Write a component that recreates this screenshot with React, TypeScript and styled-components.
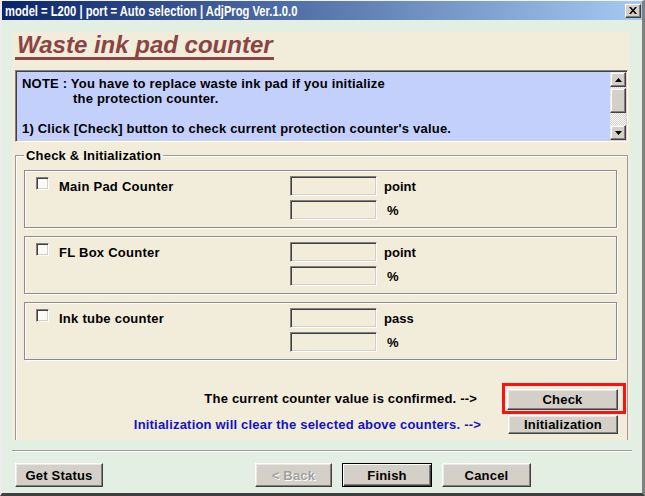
import React from 'react';
import styled, { createGlobalStyle } from 'styled-components';

const GlobalStyle = createGlobalStyle`
  html, body {
    margin: 0;
    padding: 0;
    background: #d4d0c8;
  }
  body {
    font-family: 'Liberation Sans', Arial, sans-serif;
  }
  * {
    box-sizing: border-box;
  }
`;

const Window = styled.div`
  width: 645px;
  height: 496px;
  display: flex;
  flex-direction: column;
  background: #e2efe2;
  border-style: solid;
  border-width: 1px 3px 3px 2px;
  border-color: #f4f4f4 #808080 #404040 #ececec;
  overflow: hidden;
`;

const TitleBar = styled.div`
  height: 19px;
  flex: none;
  display: flex;
  align-items: center;
  justify-content: space-between;
  padding: 0 1px 0 3px;
  background: linear-gradient(to right, #0a246a, #a6caf0);
  color: #fff;
  font-weight: bold;
  font-size: 14px;
  white-space: nowrap;
`;

/* the original caption font is a narrow one, squeeze a regular face to match */
const Caption = styled.span`
  display: inline-block;
  transform: scaleX(0.8);
  transform-origin: left center;
`;

const CloseButton = styled.button`
  width: 16px;
  height: 14px;
  padding: 0;
  display: flex;
  align-items: center;
  justify-content: center;
  background: #d4d0c8;
  border: 1px solid;
  border-color: #fff #404040 #404040 #fff;
  box-shadow: inset -1px -1px 0 #808080;
`;

const Body = styled.div`
  flex: 1;
  display: flex;
  flex-direction: column;
  padding: 12px 12px 0 10px;
`;

const Panel = styled.div`
  height: 408px;
  flex: none;
  display: flex;
  flex-direction: column;
  align-items: stretch;
  background: #f2ecda;
  padding: 0 2px 0 3px;
  overflow: hidden;
`;

const Heading = styled.h1`
  align-self: flex-start;
  margin: 1px 0 0;
  padding: 0 1px 0 2px;
  font-size: 24px;
  line-height: 24px;
  font-style: italic;
  font-weight: bold;
  color: #8a4444;
  border-bottom: 3px solid #8a4444;
`;

const NoteBox = styled.div`
  margin-top: 10px;
  height: 72px;
  display: flex;
  background: #c4d0fc;
  border: 1px solid;
  border-color: #808080 #fff #fff #808080;
  box-shadow: inset 1px 1px 0 #404040, inset -1px -1px 0 #d4d0c8;
`;

const NoteText = styled.div`
  flex: 1;
  padding: 5px 6px;
  font-size: 13px;
  font-weight: bold;
  letter-spacing: 0.2px;
  line-height: 15px;
  white-space: pre;
  color: #000;
`;

const Indent = styled.span`
  padding-left: 51px;
`;

const ScrollBar = styled.div`
  width: 16px;
  margin: 1px 1px 1px 0;
  display: flex;
  flex-direction: column;
`;

const ScrollArrow = styled.div`
  height: 15px;
  flex: none;
  display: flex;
  align-items: center;
  justify-content: center;
  background: #d4d0c8;
  border: 1px solid;
  border-color: #e8e8e8 #404040 #404040 #e8e8e8;
  box-shadow: inset -1px -1px 0 #808080, inset 1px 1px 0 #fff;
`;

const ScrollTrack = styled.div`
  flex: 1;
  display: flex;
  flex-direction: column;
  background: repeating-conic-gradient(#ffffff 0 25%, #d4d0c8 0 50%) 0 0 / 2px 2px;
`;

const ScrollThumb = styled.div`
  height: 25px;
  margin-top: 1px;
  background: #d4d0c8;
  border: 1px solid;
  border-color: #e8e8e8 #404040 #404040 #e8e8e8;
  box-shadow: inset -1px -1px 0 #808080, inset 1px 1px 0 #fff;
`;

const Group = styled.fieldset`
  flex: 1;
  margin: 6px 0 0;
  padding: 0 1px 0 8px;
  min-width: 0;
  border: 1px solid #9a9a9a;
  border-bottom: none;
  box-shadow: inset 1px 1px 0 #fff;
  display: flex;
  flex-direction: column;
`;

const Legend = styled.legend`
  margin-left: 0;
  padding: 0 2px;
  font-size: 13px;
  font-weight: bold;
  letter-spacing: 0.2px;
  line-height: 15px;
  color: #000;
`;

const CounterBox = styled.div`
  height: 58px;
  margin: 8px 9px 0 0;
  padding: 5px 0 0 11px;
  border: 1px solid #8c8c8c;
  box-shadow: inset 1px 1px 0 #fff, 1px 1px 0 #fff;
  display: grid;
  grid-template-columns: 23px 231px 87px 1fr;
  grid-template-rows: 20px 20px;
  row-gap: 4px;
  align-items: center;
  &:first-of-type {
    margin-top: 7px;
  }
`;

const CheckBox = styled.span`
  width: 13px;
  height: 13px;
  align-self: start;
  margin-top: 1px;
  background: #fbfaf6;
  border: 1px solid;
  border-color: #808080 #fff #fff #808080;
  box-shadow: inset 1px 1px 0 #404040, inset -1px -1px 0 #d4d0c8;
`;

const CounterLabel = styled.span`
  font-size: 13px;
  font-weight: bold;
  letter-spacing: 0.25px;
  color: #000;
`;

const Field = styled.input`
  grid-column: 3;
  width: 87px;
  height: 20px;
  margin: 0;
  padding: 0 3px;
  background: #f2ecda;
  border: 1px solid;
  border-color: #808080 #fff #fff #808080;
  box-shadow: inset 1px 1px 0 #404040, inset -1px -1px 0 #d4d0c8;
  font: inherit;
  outline: none;
`;

const Unit = styled.span<{ $pad: number }>`
  grid-column: 4;
  padding-left: ${(p) => p.$pad}px;
  font-size: 13px;
  font-weight: bold;
  color: #000;
`;

const Actions = styled.div`
  margin-top: 23px;
  display: grid;
  grid-template-columns: 1fr 124px;
  align-items: center;
`;

const ActionText = styled.span<{ $blue?: boolean; $gap: number }>`
  justify-self: end;
  padding-right: ${(p) => p.$gap}px;
  font-size: 13px;
  font-weight: bold;
  letter-spacing: 0.2px;
  white-space: nowrap;
  color: ${(p) => (p.$blue ? '#1212c4' : '#000')};
`;

const Highlight = styled.div`
  height: 31px;
  padding: 3px 5px 1px 2px;
  border: 3px solid #ff1010;
  display: flex;
`;

const Button = styled.button<{ $width?: number; $default?: boolean }>`
  width: ${(p) => (p.$width ? `${p.$width}px` : '100%')};
  height: 100%;
  padding: 0;
  background: #d4d0c8;
  font-family: 'Liberation Sans', Arial, sans-serif;
  font-size: 13px;
  font-weight: bold;
  letter-spacing: 0.2px;
  color: #000;
  border: 1px solid;
  border-color: ${(p) => (p.$default ? '#000' : '#fff #404040 #404040 #fff')};
  box-shadow: ${(p) =>
    p.$default
      ? 'inset 1px 1px 0 #fff, inset -1px -1px 0 #404040, inset -2px -2px 0 #808080'
      : 'inset -1px -1px 0 #808080, inset 1px 1px 0 #e8e8e8'};
  &:disabled {
    color: #a0a0a0;
    text-shadow: 1px 1px 0 #fff;
  }
`;

const InitSlot = styled.div`
  height: 19px;
  margin: 1px 8px 0 6px;
  display: flex;
`;

const Separator = styled.div`
  margin: 10px -2px 0 0;
  height: 2px;
  border-top: 1px solid #9a9a9a;
  border-bottom: 1px solid #fff;
`;

const ButtonBar = styled.div`
  margin-top: 11px;
  height: 24px;
  display: flex;
  padding-left: 3px;
`;

const NavGroup = styled.div`
  display: flex;
  gap: 10px;
  margin-left: 152px;
`;

const Arrow = ({ down }: { down?: boolean }) => (
  <svg width="7" height="4" viewBox="0 0 7 4">
    <polygon points={down ? '0,0 7,0 3.5,4' : '0,4 7,4 3.5,0'} fill="#000" />
  </svg>
);

const counters = [
  { name: 'Main Pad Counter', unit: 'point' },
  { name: 'FL Box Counter', unit: 'point' },
  { name: 'Ink tube counter', unit: 'pass' },
];

export default function App() {
  return (
    <>
      <GlobalStyle />
      <Window>
        <TitleBar>
          <Caption>model = L200 | port = Auto selection | AdjProg Ver.1.0.0</Caption>
          <CloseButton aria-label="close">
            <svg width="8" height="7" viewBox="0 0 8 7">
              <path d="M0 0h2l2 2.5L6 0h2L5 3.5 8 7H6L4 4.5 2 7H0l3-3.5z" fill="#000" />
            </svg>
          </CloseButton>
        </TitleBar>
        <Body>
          <Panel>
            <Heading>Waste ink pad counter</Heading>
            <NoteBox>
              <NoteText>
                {'NOTE : You have to replace waste ink pad if you initialize\n'}
                <Indent>the protection counter.</Indent>
                {"\n\n1) Click [Check] button to check current protection counter's value."}
              </NoteText>
              <ScrollBar>
                <ScrollArrow>
                  <Arrow />
                </ScrollArrow>
                <ScrollTrack>
                  <ScrollThumb />
                </ScrollTrack>
                <ScrollArrow>
                  <Arrow down />
                </ScrollArrow>
              </ScrollBar>
            </NoteBox>
            <Group>
              <Legend>Check &amp; Initialization</Legend>
              {counters.map((c) => (
                <CounterBox key={c.name}>
                  <CheckBox />
                  <CounterLabel>{c.name}</CounterLabel>
                  <Field readOnly />
                  <Unit $pad={7}>{c.unit}</Unit>
                  <Field readOnly />
                  <Unit $pad={10}>%</Unit>
                </CounterBox>
              ))}
              <Actions>
                <ActionText $gap={25}>The current counter value is confirmed. --&gt;</ActionText>
                <Highlight>
                  <Button>Check</Button>
                </Highlight>
                <ActionText $blue $gap={21}>
                  Initialization will clear the selected above counters. --&gt;
                </ActionText>
                <InitSlot>
                  <Button>Initialization</Button>
                </InitSlot>
              </Actions>
            </Group>
          </Panel>
          <Separator />
          <ButtonBar>
            <Button $width={88}>Get Status</Button>
            <NavGroup>
              <Button $width={77} disabled>
                &lt; Back
              </Button>
              <Button $width={90} $default>
                Finish
              </Button>
              <Button $width={89}>Cancel</Button>
            </NavGroup>
          </ButtonBar>
        </Body>
      </Window>
    </>
  );
}
